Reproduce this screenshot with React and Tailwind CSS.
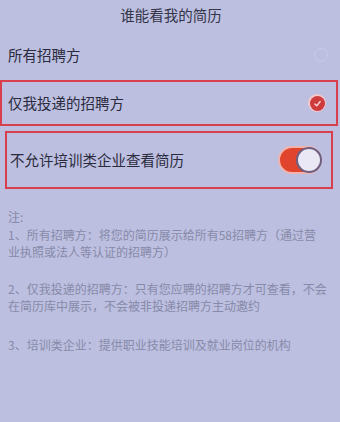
const font = { fontFamily: '"Noto Sans CJK SC", "Noto Sans", sans-serif' };

const Check = () => (
  <div className="w-[18px] h-[18px] rounded-full bg-[#f3c7cc] flex items-center justify-center">
    <div className="w-[15px] h-[15px] rounded-full bg-[#cf3a3c] flex items-center justify-center">
      <svg width="9" height="9" viewBox="0 0 10 10" fill="none">
        <path d="M2 5.5 L4.2 7.5 L8 2.8" stroke="#f6d4d4" strokeWidth="1.6" strokeLinecap="round" strokeLinejoin="round" />
      </svg>
    </div>
  </div>
);

const Toggle = () => (
  <div className="w-[44px] h-[28px] rounded-full bg-[#e1442c] border-[2px] border-[#f1b3ae] flex items-center justify-end">
    <div className="w-[26px] h-[26px] rounded-full bg-[#e9e8f4] border-[2px] border-[#6d5f82] -mr-[2px]" />
  </div>
);

export default function App() {
  return (
    <div className="w-[340px] h-[422px] bg-[#bcbfe0] overflow-hidden text-[#2b2b3d]" style={font}>
      <div className="h-[30px] flex items-center justify-center pl-[2px]">
        <p className="text-[14.5px] text-[#353548]">谁能看我的简历</p>
      </div>
      <div className="h-[48px] mt-[1px] flex items-center justify-between pl-[8px] pr-[12px]">
        <p className="text-[14.5px]">所有招聘方</p>
        <div className="w-[14px] h-[14px] rounded-full border border-[#c9cbe8]" />
      </div>
      <div className="h-[46px] mt-[1px] mr-[2px] border-[2px] border-[#d8404e] flex items-center justify-between pl-[6px] pr-[10px]">
        <p className="text-[14.5px]">仅我投递的招聘方</p>
        <Check />
      </div>
      <div className="h-[58px] mt-[5px] ml-[5px] w-[328px] border-[2px] border-[#d8404e] flex items-center justify-between pl-[3px] pr-[9px]">
        <p className="text-[14.5px]">不允许培训类企业查看简历</p>
        <Toggle />
      </div>
      <div className="pl-[8px] pt-[19px] text-[12px] leading-[17.5px] text-[#878aa8] whitespace-nowrap">
        <p>注:</p>
        <p>1、所有招聘方：将您的简历展示给所有58招聘方（通过营<br />业执照或法人等认证的招聘方）</p>
        <p className="mt-[19px]">2、仅我投递的招聘方：只有您应聘的招聘方才可查看，不会<br />在简历库中展示，不会被非投递招聘方主动邀约</p>
        <p className="mt-[21px]">3、培训类企业：提供职业技能培训及就业岗位的机构</p>
      </div>
    </div>
  );
}
